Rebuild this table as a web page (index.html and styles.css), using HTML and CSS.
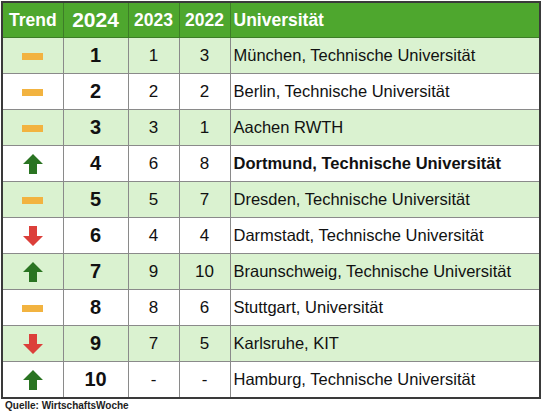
FILE: index.html
```html
<!DOCTYPE html>
<html lang="de">
<head>
  <meta charset="UTF-8" />
  <title>Ranking Universitäten</title>
  <link rel="stylesheet" href="styles.css">
</head>
<body>
  <table class="ranking">
    <colgroup>
      <col class="c-trend"><col class="c-2024"><col class="c-year"><col class="c-year"><col>
    </colgroup>
    <thead>
      <tr>
        <th>Trend</th>
        <th class="big">2024</th>
        <th>2023</th>
        <th>2022</th>
        <th class="name">Universität</th>
      </tr>
    </thead>
    <tbody>
      <tr class="alt">
        <td><span class="same"></span></td>
        <td class="rank">1</td><td>1</td><td>3</td>
        <td class="name">München, Technische Universität</td>
      </tr>
      <tr>
        <td><span class="same"></span></td>
        <td class="rank">2</td><td>2</td><td>2</td>
        <td class="name">Berlin, Technische Universität</td>
      </tr>
      <tr class="alt">
        <td><span class="same"></span></td>
        <td class="rank">3</td><td>3</td><td>1</td>
        <td class="name">Aachen RWTH</td>
      </tr>
      <tr>
        <td><svg class="arrow up" viewBox="0 0 20 20"><path d="M10 0 L20 10 L14 10 L14 20 L6 20 L6 10 L0 10 Z"/></svg></td>
        <td class="rank">4</td><td>6</td><td>8</td>
        <td class="name strong">Dortmund, Technische Universität</td>
      </tr>
      <tr class="alt">
        <td><span class="same"></span></td>
        <td class="rank">5</td><td>5</td><td>7</td>
        <td class="name">Dresden, Technische Universität</td>
      </tr>
      <tr>
        <td><svg class="arrow down" viewBox="0 0 20 20"><path d="M6 0 L14 0 L14 10 L20 10 L10 20 L0 10 L6 10 Z"/></svg></td>
        <td class="rank">6</td><td>4</td><td>4</td>
        <td class="name">Darmstadt, Technische Universität</td>
      </tr>
      <tr class="alt">
        <td><svg class="arrow up" viewBox="0 0 20 20"><path d="M10 0 L20 10 L14 10 L14 20 L6 20 L6 10 L0 10 Z"/></svg></td>
        <td class="rank">7</td><td>9</td><td>10</td>
        <td class="name">Braunschweig, Technische Universität</td>
      </tr>
      <tr>
        <td><span class="same"></span></td>
        <td class="rank">8</td><td>8</td><td>6</td>
        <td class="name">Stuttgart, Universität</td>
      </tr>
      <tr class="alt">
        <td><svg class="arrow down" viewBox="0 0 20 20"><path d="M6 0 L14 0 L14 10 L20 10 L10 20 L0 10 L6 10 Z"/></svg></td>
        <td class="rank">9</td><td>7</td><td>5</td>
        <td class="name">Karlsruhe, KIT</td>
      </tr>
      <tr>
        <td><svg class="arrow up" viewBox="0 0 20 20"><path d="M10 0 L20 10 L14 10 L14 20 L6 20 L6 10 L0 10 Z"/></svg></td>
        <td class="rank">10</td><td>-</td><td>-</td>
        <td class="name">Hamburg, Technische Universität</td>
      </tr>
    </tbody>
  </table>
  <div class="source">Quelle: WirtschaftsWoche</div>
</body>
</html>
```

FILE: styles.css
```css
body {
  margin: 0;
  padding: 1px 2px 0 1px;
  background: #ffffff;
  font-family: "Liberation Sans", Arial, sans-serif;
  color: #111;
}

.ranking {
  width: 540px;
  border-collapse: collapse;
  border: 2px solid #3a3a3a;
  table-layout: fixed;
}

.c-trend { width: 61px; }
.c-2024 { width: 65px; }
.c-year { width: 51px; }

th {
  height: 34px;
  padding: 0;
  background: #4ea72e;
  color: #ffffff;
  font-size: 17.5px;
  font-weight: bold;
  text-align: center;
  border-left: 1px solid #3d7d27;
  border-bottom: 1px solid #3d7d27;
}

th.big {
  font-size: 21px;
}

td {
  height: 35px;
  padding: 0;
  font-size: 17px;
  text-align: center;
  border-left: 1px solid #8a8a8a;
  border-top: 1px solid #8a8a8a;
  background: #ffffff;
}

tr.alt td {
  background: #daf2d0;
}

th.name, td.name {
  text-align: left;
  padding-left: 3px;
}

td.name {
  font-size: 16.5px;
}

td.strong {
  font-weight: bold;
}

td.rank {
  font-size: 20px;
  font-weight: bold;
}

.same {
  display: inline-block;
  width: 21px;
  height: 7px;
  background: #f2b340;
  vertical-align: middle;
}

.arrow {
  width: 20px;
  height: 20px;
  vertical-align: middle;
}

.arrow.up { fill: #2a7422; }
.arrow.down { fill: #dc3f3a; }

.source {
  margin: 1px 0 0 4px;
  font-size: 10px;
  line-height: 12px;
  font-weight: bold;
  color: #222;
}
```
